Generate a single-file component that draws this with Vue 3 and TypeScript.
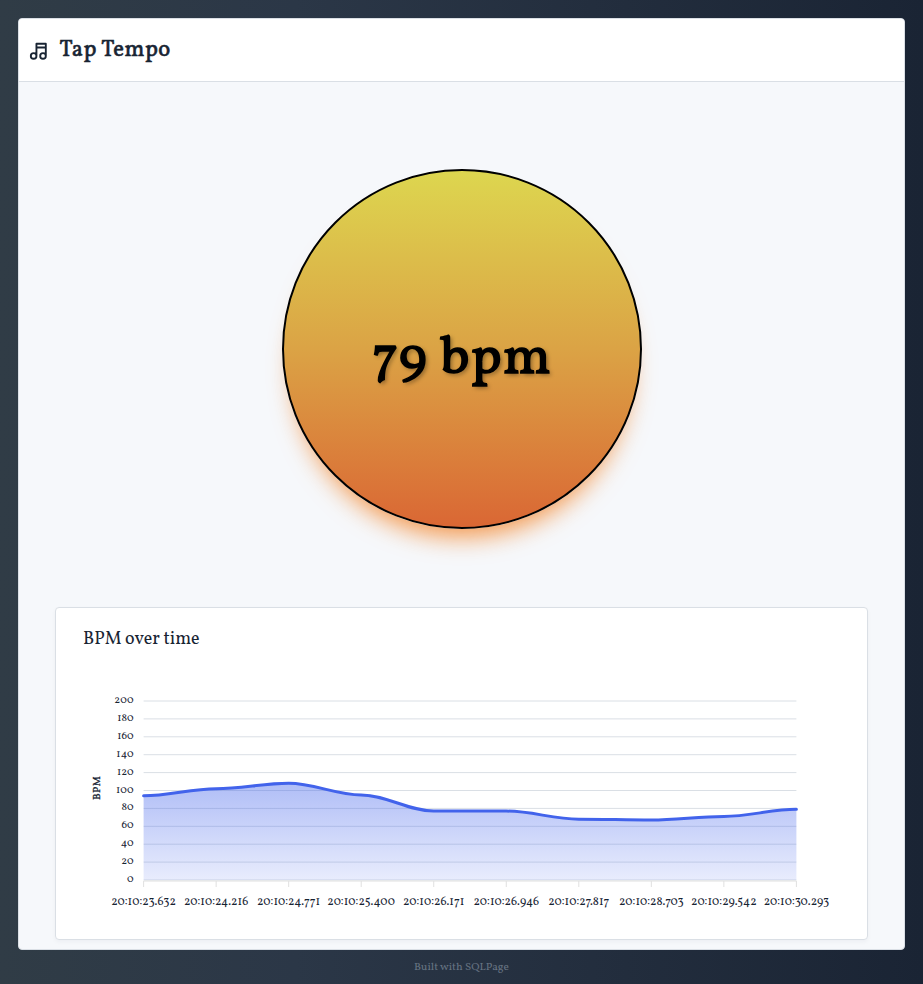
<script setup lang="ts">
interface Sample {
  time: string
  bpm: number
}

const samples: Sample[] = [
  { time: '20:10:23.632', bpm: 94 },
  { time: '20:10:24.216', bpm: 102 },
  { time: '20:10:24.771', bpm: 108 },
  { time: '20:10:25.400', bpm: 95 },
  { time: '20:10:26.171', bpm: 77 },
  { time: '20:10:26.946', bpm: 77 },
  { time: '20:10:27.817', bpm: 68 },
  { time: '20:10:28.703', bpm: 67 },
  { time: '20:10:29.542', bpm: 71 },
  { time: '20:10:30.293', bpm: 79 },
]

const left = 87.6
const right = 740.4
const top = 93
const bottom = 272
const step = (right - left) / (samples.length - 1)

const xAt = (i: number): number => left + i * step
const yAt = (v: number): number => bottom - (v / 200) * (bottom - top)

const yTicks = Array.from({ length: 11 }, (_, i) => {
  const value = 200 - i * 20
  return { y: yAt(value), value }
})

const xTicks = samples.map((s, i) => ({ x: xAt(i), time: s.time }))

const line = samples.reduce((path, s, i) => {
  const x = xAt(i)
  const y = yAt(s.bpm)
  if (i === 0) return `M${x} ${y}`
  const c = step * 0.35
  return `${path}C${xAt(i - 1) + c} ${yAt(samples[i - 1].bpm)} ${x - c} ${y} ${x} ${y}`
}, '')
const area = `${line}L${right} ${bottom}L${left} ${bottom}Z`
</script>

<template>
  <div class="page">
    <main class="shell">
      <header class="header">
        <svg class="icon" viewBox="0 0 24 24" aria-hidden="true">
          <path d="M3 17a3 3 0 1 0 6 0a3 3 0 0 0 -6 0M13 17a3 3 0 1 0 6 0a3 3 0 0 0 -6 0M9 17V4h10v13M9 8h10" />
        </svg>
        <h1 class="title">Tap Tempo</h1>
      </header>
      <section class="body">
        <button class="tap" type="button">79 bpm</button>
        <article class="card">
          <h2 class="card-title">BPM over time</h2>
          <svg class="chart" viewBox="0 0 811 331" width="811" height="331">
            <defs>
              <linearGradient id="fill" gradientUnits="userSpaceOnUse" x1="0" y1="175" x2="0" y2="272">
                <stop offset="0" stop-color="#4263eb" stop-opacity=".42" />
                <stop offset="1" stop-color="#4263eb" stop-opacity=".12" />
              </linearGradient>
            </defs>
            <line v-for="t in yTicks" :key="t.y" class="grid" :x1="left" :x2="right" :y1="t.y" :y2="t.y" />
            <line class="axis" :x1="left" :x2="right" :y1="bottom + 1" :y2="bottom + 1" />
            <line v-for="t in xTicks" :key="t.x" class="axis" :x1="t.x" :x2="t.x" :y1="bottom + 1" :y2="bottom + 7" />
            <path :d="area" fill="url(#fill)" />
            <path :d="line" class="series" />
            <text v-for="t in yTicks" :key="t.y" class="label label-y" x="77.6" :y="t.y + 2">{{ t.value }}</text>
            <text v-for="t in xTicks" :key="t.x" class="label label-x" :x="t.x" y="297">{{ t.time }}</text>
            <text class="axis-title" transform="translate(44 180) rotate(-90)">BPM</text>
          </svg>
        </article>
      </section>
    </main>
    <footer class="footer">Built with SQLPage</footer>
  </div>
</template>

<style>
body {
  margin: 0;
}
</style>

<style scoped>
.page {
  box-sizing: border-box;
  height: 984px;
  padding: 18px 18px 0;
  background: linear-gradient(90deg, #303c46 0%, #2b3747 32%, #1a2434 100%);
  font-family: Vollkorn, "Liberation Serif", serif;
  color: #182433;
}

.shell {
  box-sizing: border-box;
  height: 932px;
  border: 1px solid #dadfe5;
  border-radius: 4px;
  background: #f6f8fb;
  overflow: hidden;
}

.header {
  display: flex;
  align-items: center;
  box-sizing: border-box;
  height: 63px;
  padding: 0 9px;
  border-bottom: 1px solid #dadfe5;
  background: #fff;
}

.icon {
  width: 22.5px;
  height: 22.5px;
  margin-top: 1.5px;
  fill: none;
  stroke: #182433;
  stroke-width: 2;
  stroke-linecap: round;
  stroke-linejoin: round;
}

.title {
  margin: 2px 0 0 9px;
  font-size: 22.5px;
  font-weight: 400;
  line-height: 32px;
  letter-spacing: 0.5px;
  -webkit-text-stroke: 0.6px #182433;
}

.body {
  display: flex;
  flex-direction: column;
  align-items: center;
  padding: 87px 36px 0;
}

.tap {
  display: flex;
  align-items: center;
  justify-content: center;
  box-sizing: border-box;
  width: 360px;
  height: 360px;
  padding: 22px 0 0 1px;
  border: 2px solid #000;
  border-radius: 50%;
  background: linear-gradient(#ddd64f, #dba345 50%, #da6734);
  box-shadow: 0 20px 25px -12px rgba(243, 120, 20, 0.75);
  color: #000;
  font-family: inherit;
  font-size: 54px;
  font-weight: 400;
  line-height: 64px;
  letter-spacing: 1.2px;
  -webkit-text-stroke: 1.5px #000;
  text-shadow: 2px 2px 4px rgba(0, 0, 0, 0.4);
}

.card {
  display: grid;
  box-sizing: border-box;
  width: 813px;
  height: 333px;
  margin-top: 78px;
  border: 1px solid #dadfe5;
  border-radius: 4px;
  background: #fff;
  box-shadow: 0 2px 4px rgba(24, 36, 51, 0.04);
}

.card-title,
.chart {
  grid-area: 1 / 1;
}

.card-title {
  margin: 20px 27px;
  font-size: 18px;
  font-weight: 400;
  line-height: 24px;
}

.grid {
  stroke: #dadfe5;
}

.axis {
  stroke: #e0e0e0;
}

.series {
  fill: none;
  stroke: #4263eb;
  stroke-width: 3;
  stroke-linecap: round;
}

.label {
  fill: #182433;
}

.label-y {
  font-size: 11px;
  text-anchor: end;
}

.label-x {
  font-size: 12px;
  text-anchor: middle;
}

.axis-title {
  fill: #182433;
  stroke: #182433;
  stroke-width: 0.3px;
  font-size: 10.8px;
  letter-spacing: 0.3px;
  text-anchor: middle;
}

.footer {
  height: 34px;
  color: #667382;
  font-size: 11.25px;
  line-height: 34px;
  text-align: center;
}
</style>
